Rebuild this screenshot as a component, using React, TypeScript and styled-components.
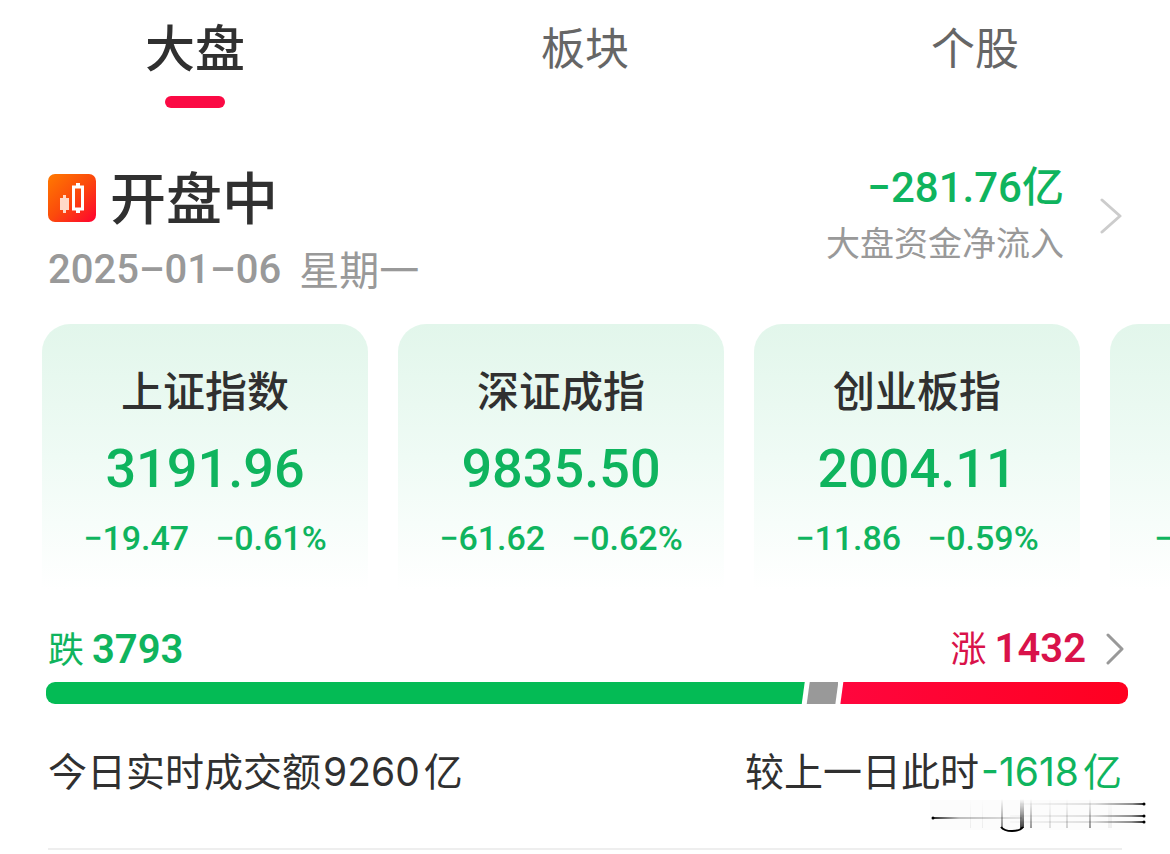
import React from "react";
import styled, { createGlobalStyle } from "styled-components";

const GREEN = "#0fb45e";
const RED = "#d9124a";
const INK = "#303030";
const MUTED = "#999999";

const GlobalStyle = createGlobalStyle`
  *, *::before, *::after { box-sizing: border-box; }
  body {
    margin: 0;
    background: #ffffff;
    color: ${INK};
    font-family: Roboto, "Noto Sans CJK SC", sans-serif;
    overflow-x: hidden;
  }
  button {
    margin: 0;
    padding: 0;
    border: 0;
    background: none;
    color: inherit;
    font: inherit;
    cursor: pointer;
  }
  h1, h2, p { margin: 0; }
`;

const Page = styled.main`
  position: relative;
  display: flex;
  flex-direction: column;
`;

const Tabs = styled.nav`
  display: grid;
  grid-template-columns: repeat(3, 1fr);
  height: 108px;
`;

const Tab = styled.button<{ $active?: boolean }>`
  display: flex;
  flex-direction: column;
  align-items: center;
  justify-content: space-between;
  padding-top: 4px;
  color: ${(p) => (p.$active ? INK : "#666666")};
  font-size: ${(p) => (p.$active ? 50 : 44)}px;
  font-weight: ${(p) => (p.$active ? 500 : 400)};
  line-height: 92px;

  &::after {
    content: "";
    width: 60px;
    height: 12px;
    border-radius: 6px;
    background: ${(p) => (p.$active ? "#fb0a44" : "transparent")};
  }
`;

const Header = styled.header`
  display: flex;
  justify-content: space-between;
  align-items: flex-start;
  padding: 52px 48px 0;
`;

const TitleLine = styled.div`
  display: flex;
  align-items: center;
  gap: 14px;
  height: 76px;
`;

const Title = styled.h1`
  padding-top: 4px;
  font-size: 56px;
  font-weight: 500;
  line-height: 76px;
`;

const DateLine = styled.p`
  display: flex;
  gap: 18px;
  color: ${MUTED};
  font-size: 40px;
  line-height: 72px;
  height: 68px;
`;

const DateValue = styled.time`
  font-weight: 500;
  line-height: 68px;
`;

const Inflow = styled.button`
  display: flex;
  align-items: center;
  gap: 36px;
  text-align: right;
`;

const InflowValue = styled.div`
  color: ${GREEN};
  font-size: 42px;
  font-weight: 500;
  line-height: 56px;
`;

const InflowLabel = styled.div`
  color: ${MUTED};
  font-size: 34px;
  line-height: 56px;
`;

const Cards = styled.section`
  display: flex;
  gap: 30px;
  margin-top: 20px;
  padding-left: 42px;
  overflow: hidden;
`;

const Card = styled.article`
  flex: 0 0 326px;
  height: 266px;
  padding-top: 42px;
  border-radius: 28px 28px 0 0;
  background: linear-gradient(#e2f6eb, #effbf5 50%, #ffffff);
  text-align: center;
`;

const CardTitle = styled.h2`
  height: 54px;
  font-size: 42px;
  font-weight: 500;
  line-height: 54px;
`;

const CardValue = styled.div`
  height: 98px;
  color: ${GREEN};
  font-size: 54px;
  font-weight: 500;
  line-height: 98px;
`;

const Changes = styled.div<{ $start?: boolean }>`
  display: flex;
  justify-content: ${(p) => (p.$start ? "flex-start" : "center")};
  gap: 26px;
  padding-left: ${(p) => (p.$start ? 44 : 0)}px;
  color: ${GREEN};
  font-size: 34px;
  font-weight: 500;
  line-height: 40px;
`;

const Breadth = styled.section`
  padding: 34px 42px 0 46px;
`;

const BreadthLine = styled.div`
  display: flex;
  justify-content: space-between;
  height: 50px;
  padding: 0 4px 0 2px;
  line-height: 52px;
`;

const Count = styled.span<{ $color: string }>`
  display: flex;
  align-items: baseline;
  gap: 8px;
  color: ${(p) => p.$color};
  font-size: 36px;

  strong {
    font-size: 40px;
    font-weight: 600;
  }
`;

const RiseButton = styled.button`
  display: flex;
  align-items: center;
  gap: 20px;
`;

const Bar = styled.div`
  display: flex;
  height: 22px;
  margin-top: 8px;
  border-radius: 9px;
  overflow: hidden;
`;

const Segment = styled.div<{ $kind: "fall" | "flat" | "rise" }>`
  background: ${(p) =>
    ({
      fall: "#04bb55",
      flat: "#999999",
      rise: "linear-gradient(90deg, #ff063e, #ff0020)",
    })[p.$kind]};
  clip-path: ${(p) =>
    ({
      fall: "polygon(0 0, 100% 0, calc(100% - 3px) 100%, 0 100%)",
      flat: "polygon(5px 0, 100% 0, calc(100% - 3px) 100%, 2px 100%)",
      rise: "polygon(5px 0, 100% 0, 100% 100%, 2px 100%)",
    })[p.$kind]};
`;

const Turnover = styled.section`
  display: flex;
  justify-content: space-between;
  margin: 40px 48px 0;
  height: 106px;
  border-bottom: 2px solid #eeeeee;
  font-family: Inter, "Noto Sans CJK SC", sans-serif;
  font-size: 39px;
  line-height: 56px;
`;

const Amount = styled.span<{ $green?: boolean }>`
  margin: 0 4px 0 2px;
  color: ${(p) => (p.$green ? GREEN : INK)};
`;

const Unit = styled.span`
  color: ${GREEN};
`;

const Watermark = styled.svg`
  position: absolute;
  right: 24px;
  bottom: 16px;
`;

const Chevron = ({ color, width, height }: { color: string; width: number; height: number }) => (
  <svg width={width} height={height} fill="none" stroke={color} strokeWidth="3" aria-hidden="true">
    <path d={`M2 2 L${width - 2} ${height / 2} L2 ${height - 2}`} strokeLinecap="round" strokeLinejoin="round" />
  </svg>
);

const MarketIcon = () => (
  <svg width="48" height="48" viewBox="0 0 48 48" aria-hidden="true">
    <defs>
      <linearGradient id="market" x1="0" y1="0" x2="1" y2="1">
        <stop offset="0" stopColor="#ff7a00" />
        <stop offset="0.5" stopColor="#fb4a0c" />
        <stop offset="1" stopColor="#ff0030" />
      </linearGradient>
    </defs>
    <rect width="48" height="48" rx="7" fill="url(#market)" />
    <path d="M15 21h3v3h3v12h-3v3h-3v-3h-3V24h3z" fill="#ffd9c8" />
    <path d="M30 9v4M30 35v4" stroke="#fff" strokeWidth="4" />
    <rect x="25.5" y="13" width="9" height="22" fill="none" stroke="#fff" strokeWidth="3" />
  </svg>
);

const indices = [
  { name: "上证指数", value: "3191.96", diff: "−19.47", rate: "−0.61%" },
  { name: "深证成指", value: "9835.50", diff: "−61.62", rate: "−0.62%" },
  { name: "创业板指", value: "2004.11", diff: "−11.86", rate: "−0.59%" },
];

const breadth = [
  { kind: "fall", count: 3793 },
  { kind: "flat", count: 168 },
  { kind: "rise", count: 1448 },
] as const;

const verticals = [
  [1, 0.06, 40], [1, 0.06, 52], [2, 0.45, 71], [4, 0.75, 90], [2, 0.4, 100],
  [2, 0.12, 119], [2, 0.18, 136], [2, 0.4, 159], [4, 0.06, 178],
];

export default function App() {
  return (
    <>
      <GlobalStyle />
      <Page>
        <Tabs>
          <Tab $active>大盘</Tab>
          <Tab>板块</Tab>
          <Tab>个股</Tab>
        </Tabs>

        <Header>
          <div>
            <TitleLine>
              <MarketIcon />
              <Title>开盘中</Title>
            </TitleLine>
            <DateLine>
              <DateValue dateTime="2025-01-06">2025–01–06</DateValue>
              <span>星期一</span>
            </DateLine>
          </div>
          <Inflow>
            <div>
              <InflowValue>−281.76亿</InflowValue>
              <InflowLabel>大盘资金净流入</InflowLabel>
            </div>
            <Chevron color="#cccccc" width={22} height={36} />
          </Inflow>
        </Header>

        <Cards>
          {indices.map((item) => (
            <Card key={item.name}>
              <CardTitle>{item.name}</CardTitle>
              <CardValue>{item.value}</CardValue>
              <Changes>
                <span>{item.diff}</span>
                <span>{item.rate}</span>
              </Changes>
            </Card>
          ))}
          <Card>
            <CardTitle />
            <CardValue />
            <Changes $start>−</Changes>
          </Card>
        </Cards>

        <Breadth>
          <BreadthLine>
            <Count $color={GREEN}>
              跌<strong>3793</strong>
            </Count>
            <RiseButton>
              <Count $color={RED}>
                涨<strong>1432</strong>
              </Count>
              <Chevron color="#999999" width={18} height={32} />
            </RiseButton>
          </BreadthLine>
          <Bar>
            {breadth.map((part) => (
              <Segment key={part.kind} $kind={part.kind} style={{ flexGrow: part.count }} />
            ))}
          </Bar>
        </Breadth>

        <Turnover>
          <p>
            今日实时成交额<Amount>9260</Amount>亿
          </p>
          <p>
            较上一日此时<Amount $green>-1618</Amount>
            <Unit>亿</Unit>
          </p>
        </Turnover>

        <Watermark width="216" height="36" viewBox="0 0 216 36" aria-hidden="true">
          <defs>
            <linearGradient id="toRight">
              <stop offset="0" stopColor="#000" stopOpacity="0.02" />
              <stop offset="0.6" stopColor="#000" stopOpacity="0.12" />
              <stop offset="0.9" stopColor="#000" stopOpacity="0.45" />
              <stop offset="1" stopColor="#000" stopOpacity="0.85" />
            </linearGradient>
            <linearGradient id="toLeft">
              <stop offset="0" stopColor="#000" stopOpacity="0.85" />
              <stop offset="0.3" stopColor="#000" stopOpacity="0.25" />
              <stop offset="1" stopColor="#000" stopOpacity="0.1" />
            </linearGradient>
            <linearGradient id="down" x1="0" y1="0" x2="0" y2="1">
              <stop offset="0" stopColor="#000" stopOpacity="0" />
              <stop offset="1" stopColor="#000" />
            </linearGradient>
          </defs>
          <rect y="2" width="216" height="30" fill="#000" opacity="0.01" />
          <rect x="90" y="5" width="125" height="2" fill="url(#toRight)" />
          <rect x="80" y="17" width="135" height="2" fill="url(#toRight)" />
          <rect x="80" y="23" width="135" height="2" fill="url(#toRight)" />
          <rect x="2" y="19" width="90" height="2" fill="url(#toLeft)" />
          <circle cx="3" cy="20" r="1.5" />
          <circle cx="214" cy="6" r="1.5" />
          <circle cx="214" cy="18" r="1.5" />
          <circle cx="214" cy="24" r="1.5" />
          {verticals.map(([w, opacity, x]) => (
            <rect key={x} x={x} y="1" width={w} height="29" fill="url(#down)" opacity={opacity} />
          ))}
          <path d="M71 29q3 4 11 4t11-4" fill="none" stroke="#000" strokeWidth="2" />
        </Watermark>
      </Page>
    </>
  );
}
